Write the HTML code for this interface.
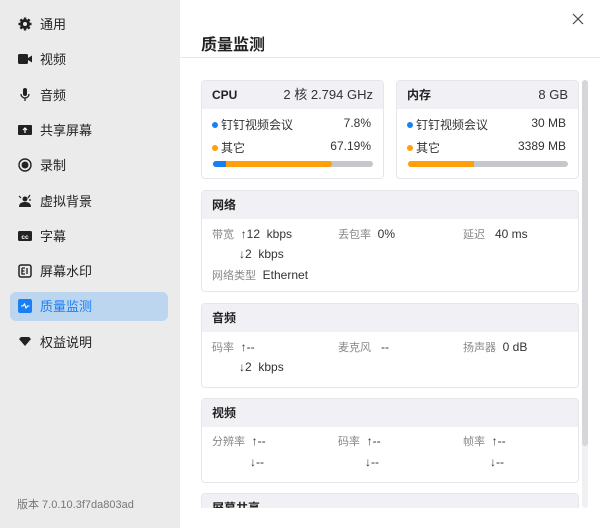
<!DOCTYPE html>
<html><head><meta charset="utf-8"><style>
*{margin:0;padding:0;box-sizing:border-box}
body{width:600px;height:528px;overflow:hidden;font-family:"Liberation Sans","Noto Sans CJK SC",sans-serif;background:#fff;position:relative;color:#222}
.side{position:absolute;left:0;top:0;width:180px;height:528px;background:#ebebeb}
.it{position:absolute;left:10px;width:158px;height:29px;border-radius:6px;font-size:13px;line-height:29px;padding-left:30px;color:#222}
.it svg{position:absolute;left:8px;top:7px}
.act{background:#bcd6f0;color:#1a7ff5}
.ver{position:absolute;left:17px;top:496px;font-size:11px;color:#777}
.a{position:absolute}
.title{left:201px;top:31px;font-size:16px;font-weight:bold;color:#222}
.hr{left:180px;top:57px;width:420px;height:1px;background:#e8e8e8}
.card{position:absolute;border:1px solid #e6e6ea;border-radius:4px;background:#fff;overflow:hidden}
.hd{height:28px;background:#f1f1f5;font-size:12px;font-weight:bold;line-height:28px;padding:0 10px;position:relative}
.hd .r{position:absolute;right:10px;top:0;font-weight:normal;font-size:13px;color:#333}
.t{position:absolute;font-size:12px;color:#333;white-space:nowrap}
.g{color:#888;font-size:11px}
.dot{display:inline-block;width:6px;height:6px;border-radius:3px;margin-right:3px;vertical-align:1px}
.bar{position:absolute;left:11px;height:6px;border-radius:3px;background:#c5c7cb;overflow:hidden;width:160px}
</style></head><body>
<div class="side">
<div class="it" style="top:10px"><svg width="14" height="14" viewBox="0 0 14 14"><circle cx="7" cy="7" r="5" fill="#222"/><g stroke="#222" stroke-width="2.4"><path d="M7 0.5v13M0.5 7h13M2.4 2.4l9.2 9.2M11.6 2.4l-9.2 9.2"/></g><circle cx="7" cy="7" r="2" fill="#ebebeb"/></svg>通用</div>
<div class="it" style="top:45px"><svg width="14" height="14" viewBox="0 0 14 14"><rect x="0" y="2" width="10" height="10" rx="1.5" fill="#222"/><path d="M10 6l4-2.5v7L10 8z" fill="#222"/></svg>视频</div>
<div class="it" style="top:81px"><svg width="14" height="14" viewBox="0 0 14 14"><rect x="5" y="0" width="4" height="8" rx="2" fill="#222"/><path d="M3 6a4 4 0 0 0 8 0M7 10v3" stroke="#222" stroke-width="1.3" fill="none"/></svg>音频</div>
<div class="it" style="top:116px"><svg width="14" height="14" viewBox="0 0 14 14"><rect x="0" y="2" width="14" height="10" rx="1" fill="#222"/><path d="M7 10V5M5 7l2-2 2 2" stroke="#fff" stroke-width="1.2" fill="none"/></svg>共享屏幕</div>
<div class="it" style="top:151px"><svg width="14" height="14" viewBox="0 0 14 14"><circle cx="7" cy="7" r="6" stroke="#222" stroke-width="1.4" fill="none"/><circle cx="7" cy="7" r="3.5" fill="#222"/></svg>录制</div>
<div class="it" style="top:187px"><svg width="14" height="14" viewBox="0 0 14 14"><circle cx="7" cy="5" r="2.5" fill="#222"/><path d="M1 13c0-4 3-5 6-5s6 1 6 5z" fill="#222"/><path d="M1 2l2 2M12 1l-2 3M13 6h-2" stroke="#222" stroke-width="1.2"/></svg>虚拟背景</div>
<div class="it" style="top:222px"><svg width="14" height="14" viewBox="0 0 14 14"><rect x="0" y="2" width="14" height="10" rx="1.5" fill="#222"/><text x="7" y="10" font-size="6.5" font-weight="bold" fill="#fff" text-anchor="middle" font-family="Liberation Sans">cc</text></svg>字幕</div>
<div class="it" style="top:257px"><svg width="14" height="14" viewBox="0 0 14 14"><rect x="1" y="1" width="12" height="12" rx="2" stroke="#222" stroke-width="1.5" fill="none"/><path d="M4 4v6h3M4 7h2.5M4 4h3M9 4v6" stroke="#222" stroke-width="1.3" fill="none"/></svg>屏幕水印</div>
<div class="it act" style="top:292px"><svg width="14" height="14" viewBox="0 0 14 14"><rect x="0" y="0" width="14" height="14" rx="2" fill="#1a7ff5"/><path d="M3 7h2l1.5-2 1.5 4 1.5-2h2" stroke="#fff" stroke-width="1.1" fill="none"/></svg>质量监测</div>
<div class="it" style="top:328px"><svg width="14" height="14" viewBox="0 0 14 14"><path d="M1 4l2-2h8l2 2-6 7z" fill="#222"/></svg>权益说明</div>
<div class="ver">版本 7.0.10.3f7da803ad</div>
</div>
<div class="a title">质量监测</div>
<div class="a" style="left:571px;top:12px"><svg width="14" height="14" viewBox="0 0 14 14"><path d="M2 2l10 10M12 2L2 12" stroke="#444" stroke-width="1.2"/></svg></div>
<div class="a hr"></div>
<div class="a" style="left:180px;top:58px;width:420px;height:450px;overflow:hidden">
<div style="position:absolute;left:-180px;top:-58px;width:600px;height:508px;overflow:hidden">
<div class="card" style="left:201px;top:80px;width:183px;height:99px"><div class="hd">CPU<span class="r">2 核 2.794 GHz</span></div>
<div class="t" style="left:10px;top:35px"><span class="dot" style="background:#1a7ff5"></span>钉钉视频会议</div><div class="t" style="right:12px;top:35px">7.8%</div>
<div class="t" style="left:10px;top:58px"><span class="dot" style="background:#ff9f0a"></span>其它</div><div class="t" style="right:12px;top:58px">67.19%</div>
<div class="bar" style="top:80px"><div style="position:absolute;left:0;top:0;height:6px;width:119px;background:#ff9f0a;border-radius:0 3px 3px 0"></div><div style="position:absolute;left:0;top:0;height:6px;width:13px;background:#1a7ff5"></div></div></div>
<div class="card" style="left:396px;top:80px;width:183px;height:99px"><div class="hd">内存<span class="r">8 GB</span></div>
<div class="t" style="left:10px;top:35px"><span class="dot" style="background:#1a7ff5"></span>钉钉视频会议</div><div class="t" style="right:12px;top:35px">30 MB</div>
<div class="t" style="left:10px;top:58px"><span class="dot" style="background:#ff9f0a"></span>其它</div><div class="t" style="right:12px;top:58px">3389 MB</div>
<div class="bar" style="top:80px"><div style="position:absolute;left:0;top:0;height:6px;width:66px;background:#ff9f0a"></div></div></div>
<div class="card" style="left:201px;top:190px;width:378px;height:102px"><div class="hd">网络</div>
<div class="t" style="left:10px;top:35px"><span class="g">带宽</span>&nbsp; ↑12&nbsp; kbps</div>
<div class="t" style="left:136px;top:35px"><span class="g">丢包率</span>&nbsp; 0%</div>
<div class="t" style="left:261px;top:35px"><span class="g">延迟</span>&nbsp;&nbsp; 40 ms</div>
<div class="t" style="left:37px;top:56px">↓2&nbsp; kbps</div>
<div class="t" style="left:10px;top:76px"><span class="g">网络类型</span>&nbsp; Ethernet</div></div>
<div class="card" style="left:201px;top:303px;width:378px;height:85px"><div class="hd">音频</div>
<div class="t" style="left:10px;top:35px"><span class="g">码率</span>&nbsp; ↑--</div>
<div class="t" style="left:136px;top:35px"><span class="g">麦克风</span>&nbsp;&nbsp; --</div>
<div class="t" style="left:261px;top:35px"><span class="g">扬声器</span>&nbsp; 0 dB</div>
<div class="t" style="left:37px;top:56px">↓2&nbsp; kbps</div></div>
<div class="card" style="left:201px;top:398px;width:378px;height:85px"><div class="hd">视频</div>
<div class="t" style="left:10px;top:34px"><span class="g">分辨率</span>&nbsp; ↑--</div>
<div class="t" style="left:136px;top:34px"><span class="g">码率</span>&nbsp; ↑--</div>
<div class="t" style="left:261px;top:34px"><span class="g">帧率</span>&nbsp; ↑--</div>
<div class="t" style="left:48px;top:56px">↓--</div>
<div class="t" style="left:163px;top:56px">↓--</div>
<div class="t" style="left:288px;top:56px">↓--</div></div>
<div class="card" style="left:201px;top:493px;width:378px;height:20px"><div class="hd">屏幕共享</div></div>
<div style="position:absolute;left:582px;top:80px;width:6px;height:428px;background:#f0f0f2;border-radius:3px"></div>
<div style="position:absolute;left:582px;top:80px;width:6px;height:366px;background:#d4d6da;border-radius:3px"></div>
</div></div>
</body></html>
